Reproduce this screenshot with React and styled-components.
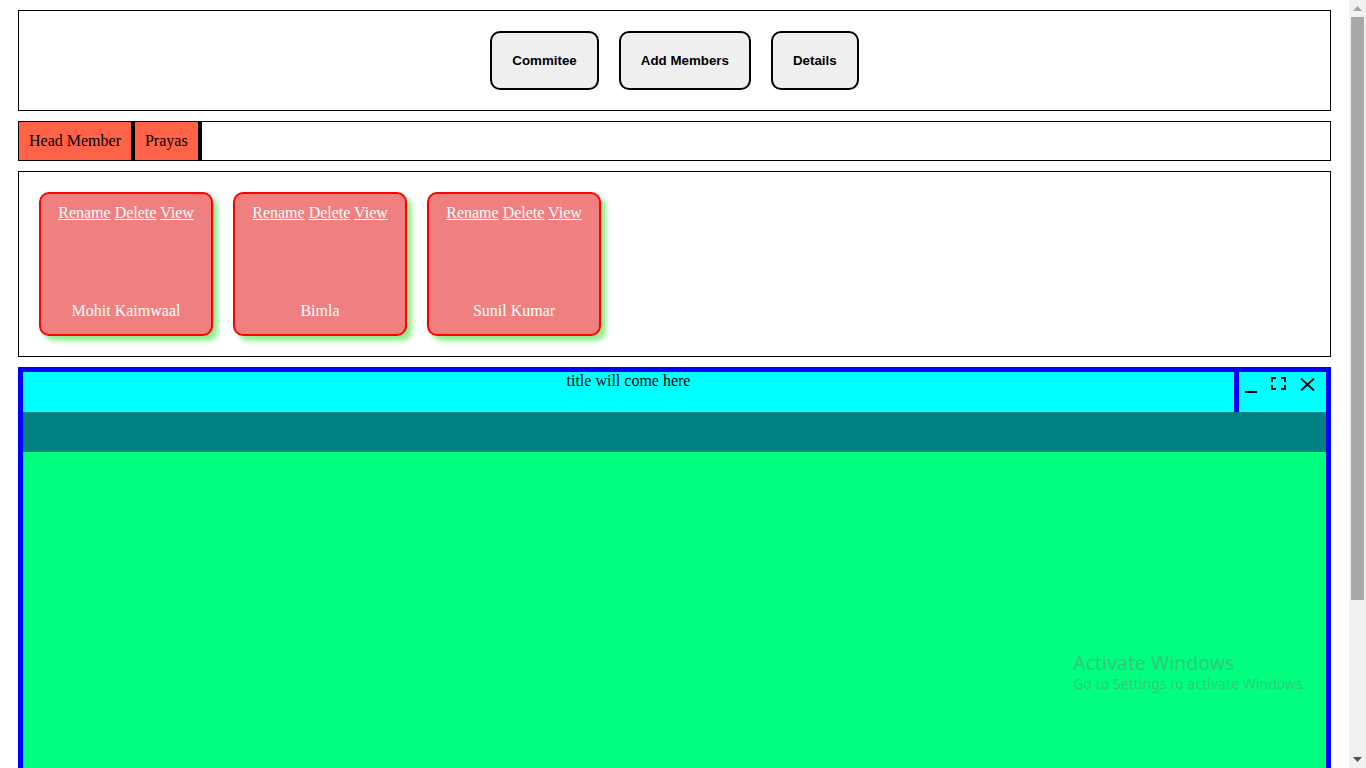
import React from 'react';
import styled, { createGlobalStyle } from 'styled-components';

const GlobalStyle = createGlobalStyle`
  html, body {
    overflow: hidden;
  }
  body {
    margin: 0;
    font-family: "Liberation Serif", "Times New Roman", serif;
    font-size: 16px;
    background: #fff;
  }
`;

const members = ['Mohit Kaimwaal', 'Bimla', 'Sunil Kumar'];

const App = () => {
  return (
    <>
      <GlobalStyle />
      <Page>
        <TopBar>
          <NavButton>Commitee</NavButton>
          <NavButton>Add Members</NavButton>
          <NavButton>Details</NavButton>
        </TopBar>

        <Breadcrumb>
          <Crumb>Head Member</Crumb>
          <Crumb>Prayas</Crumb>
        </Breadcrumb>

        <CardArea>
          {members.map((name) => (
            <Card key={name}>
              <Actions>
                <a href="#">Rename</a> <a href="#">Delete</a> <a href="#">View</a>
              </Actions>
              <Name>{name}</Name>
            </Card>
          ))}
        </CardArea>

        <Window>
          <TitleBar>
            <Title>title will come here</Title>
            <Controls>
              <svg width="14" height="16" viewBox="0 0 14 16">
                <rect x="0" y="14" width="12" height="2" fill="#000" />
              </svg>
              <svg width="15" height="13" viewBox="0 0 15 13" fill="none" stroke="#000" strokeWidth="2">
                <path d="M1 5V1h4M10 1h4v4M14 8v4h-4M5 12H1V8" />
              </svg>
              <svg width="15" height="13" viewBox="0 0 15 13" fill="none" stroke="#000" strokeWidth="1.8">
                <path d="M1 0.5l13 12M14 0.5l-13 12" />
              </svg>
            </Controls>
          </TitleBar>
          <ToolStrip />
          <WindowBody />
        </Window>
      </Page>

      <Watermark>
        <WatermarkTitle>Activate Windows</WatermarkTitle>
        <WatermarkText>Go to Settings to activate Windows.</WatermarkText>
      </Watermark>

      <ScrollTrack>
        <ScrollArrow>
          <svg width="9" height="5" viewBox="0 0 9 5"><path d="M0 5L4.5 0L9 5z" fill="#a3a3a3" /></svg>
        </ScrollArrow>
        <ScrollThumb />
        <ScrollArrow>
          <svg width="9" height="5" viewBox="0 0 9 5"><path d="M0 0L4.5 5L9 0z" fill="#505050" /></svg>
        </ScrollArrow>
      </ScrollTrack>
    </>
  );
};

export default App;

const Page = styled.div`
  width: 1349px;
  box-sizing: border-box;
  padding: 10px 18px;
  display: flex;
  flex-direction: column;
  gap: 10px;
`;

const TopBar = styled.div`
  border: 1px solid #000;
  padding: 20px;
  display: flex;
  justify-content: center;
  gap: 20px;
`;

const NavButton = styled.button`
  height: 59px;
  padding: 0 20px;
  background: #efefef;
  border: 2px solid #000;
  border-radius: 10px;
  font-family: "Liberation Sans", Arial, sans-serif;
  font-size: 13.33px;
  font-weight: bold;
  color: #000;
  cursor: pointer;
`;

const Breadcrumb = styled.div`
  border: 1px solid #000;
  height: 38px;
  display: flex;
`;

const Crumb = styled.div`
  background: #ff6347;
  padding: 0 10px;
  line-height: 38px;
  border-right: 4px solid #000;
`;

const CardArea = styled.div`
  border: 1px solid #000;
  padding: 20px;
  display: flex;
  gap: 20px;
`;

const Card = styled.div`
  width: 170px;
  height: 140px;
  background: #f08080;
  border: 2px solid #ff0000;
  border-radius: 10px;
  box-shadow: 5px 5px 5px #90ee90;
  color: #fff;
  display: flex;
  flex-direction: column;
  justify-content: space-between;
  align-items: center;
  text-align: center;
`;

const Actions = styled.div`
  margin-top: 10px;
  line-height: 18px;

  a {
    color: #fff;
  }
`;

const Name = styled.div`
  margin-bottom: 14px;
  line-height: 18px;
`;

const Window = styled.div`
  border: 5px solid #0000ff;
  height: 580px;
  display: flex;
  flex-direction: column;
`;

const TitleBar = styled.div`
  height: 40px;
  background: #00ffff;
  display: flex;
`;

const Title = styled.div`
  flex: 1;
  text-align: center;
  line-height: 18px;
`;

const Controls = styled.div`
  width: 81px;
  border-left: 5px solid #0000ff;
  display: flex;
  align-items: flex-start;
  padding: 5px 0 0 6px;
  gap: 12px;

  svg {
    display: block;
  }

  svg:last-child {
    margin-left: 2px;
    margin-top: 1px;
  }
`;

const ToolStrip = styled.div`
  height: 40px;
  background: #008080;
`;

const WindowBody = styled.div`
  flex: 1;
  background: #00ff7f;
`;

const Watermark = styled.div`
  position: fixed;
  left: 1073px;
  top: 650px;
  color: rgba(120, 120, 120, 0.42);
  font-family: "Noto Sans", "Open Sans", sans-serif;
  pointer-events: none;
`;

const WatermarkTitle = styled.div`
  font-size: 19.5px;
  line-height: 25px;
`;

const WatermarkText = styled.div`
  font-size: 14.1px;
  line-height: 18px;
`;

const ScrollTrack = styled.div`
  position: fixed;
  top: 0;
  right: 0;
  width: 17px;
  height: 100vh;
  background: #f1f1f1;
  display: flex;
  flex-direction: column;
`;

const ScrollArrow = styled.div`
  height: 17px;
  display: flex;
  align-items: center;
  justify-content: center;
`;

const ScrollThumb = styled.div`
  height: 583px;
  margin: 0 2px;
  background: #a8a8a8;
  margin-bottom: auto;
`;
